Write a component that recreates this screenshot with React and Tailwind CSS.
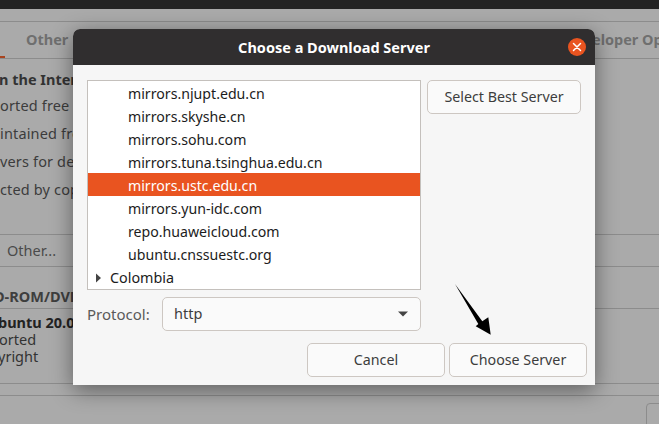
const font = { fontFamily: '"Noto Sans", sans-serif' };

function Row({ children, active }) {
  return (
    <div className={`h-[23px] pl-[40px] pt-[1px] text-[14.15px] leading-[23px] whitespace-nowrap ${active ? "bg-[#e95420] text-white" : "text-[#1c1c1c]"}`}>
      {children}
    </div>
  );
}

function Btn({ className, children }) {
  return (
    <button className={`h-[34px] rounded-[5px] border border-[#cdc7c2] bg-[#fafafa] text-[14.25px] text-[#3d3d3d] ${className}`}>
      {children}
    </button>
  );
}

export default function App() {
  return (
    <div style={font} className="relative w-[659px] h-[424px] overflow-hidden bg-[#aaaaaa] text-[#3c3c3c]">
      <div className="h-[9px] bg-[#232323]" />
      <div className="h-[13px] border-b border-[#8c8c8c]" />
      <div className="h-[37px] border-b border-[#8c8c8c] relative flex justify-between pl-[26px] pr-0 items-center text-[14.5px] font-bold text-[#6f6f6f] whitespace-nowrap overflow-hidden">
        <span>Other</span>
        <span className="w-[67px] overflow-hidden">eloper Op</span>
        <div className="absolute left-0 bottom-0 w-[5px] h-[2px] bg-[#a9441f]" />
      </div>
      <div className="h-[175px] pt-[8px] text-[14.5px] leading-[28px] whitespace-nowrap">
        <div className="font-bold -ml-[1px] text-[#333] h-[24px] leading-[24px]">n the Intern</div>
        <div className="tracking-[0.15px]">orted free</div>
        <div className="tracking-[0.15px]">intained free</div>
        <div className="tracking-[0.15px]">vers for dev</div>
        <div className="tracking-[0.15px]">cted by cop</div>
      </div>
      <div className="h-[33px] border-y border-[#8c8c8c] pl-[7px] text-[14.5px] leading-[31px] text-[#4a4a4a]">Other...</div>
      <div className="h-[42px] border-b border-[#8c8c8c] flex items-center -ml-[6px] font-bold text-[14.5px] text-[#3e3e3e] whitespace-nowrap pt-[18px]">D-ROM/DVD</div>
      <div className="h-[75px] border-b border-[#8c8c8c] pt-[5px] text-[14.5px] leading-[17px] whitespace-nowrap text-[#333]">
        <div className="font-bold -ml-[2px] text-[#222]">buntu 20.04</div>
        <div className="-ml-[1px]">orted</div>
        <div className="-ml-[2px]">yright</div>
      </div>
      <div className="h-[12px] border-b border-[#8c8c8c]" />
      <div className="absolute left-[646px] top-[403px] w-[20px] h-[30px] rounded-[4px] border border-[#8c8c8c]" />

      <div className="absolute left-[73px] top-[29px] w-[522px] h-[356px] rounded-t-[7px] bg-[#f6f6f6] flex flex-col shadow-[0_5px_22px_rgba(0,0,0,0.45)]">
        <div className="h-[36px] shrink-0 rounded-t-[7px] bg-[#302e2f] flex items-center justify-center relative text-white font-bold text-[14.5px] pt-[2px]">
          Choose a Download Server
          <div className="absolute left-[495px] top-[9px] w-[18px] h-[18px] rounded-full bg-[#e95420] flex items-center justify-center">
            <svg width="10" height="10" viewBox="0 0 10 10"><path d="M1.5 1.5L8.5 8.5M8.5 1.5L1.5 8.5" stroke="#fff" strokeWidth="1.5" strokeLinecap="round" /></svg>
          </div>
        </div>
        <div className="flex-1 px-[14px] pt-[15px] flex flex-col">
          <div className="flex gap-[6px]">
            <div className="w-[334px] h-[210px] border border-[#c4c0bc] bg-white overflow-hidden">
              <Row>mirrors.njupt.edu.cn</Row>
              <Row>mirrors.skyshe.cn</Row>
              <Row>mirrors.sohu.com</Row>
              <Row>mirrors.tuna.tsinghua.edu.cn</Row>
              <Row active>mirrors.ustc.edu.cn</Row>
              <Row>mirrors.yun-idc.com</Row>
              <Row>repo.huaweicloud.com</Row>
              <Row>ubuntu.cnssuestc.org</Row>
              <div className="h-[23px] pl-[7px] pt-[2px] flex items-center gap-[8px] text-[14.35px] text-[#1c1c1c]">
                <svg width="7" height="10" viewBox="0 0 7 10"><path d="M1 0.5L6 5L1 9.5Z" fill="#444" /></svg>
                Colombia
              </div>
            </div>
            <Btn className="w-[154px]">Select Best Server</Btn>
          </div>
          <div className="flex items-center mt-[7px] w-[334px] justify-between">
            <span className="text-[15px] text-[#5a5a5a]">Protocol:</span>
            <div className="w-[259px] h-[34px] rounded-[5px] border border-[#cdc7c2] bg-[#fafafa] flex items-center justify-between pl-[11px] pr-[11px] text-[14.5px] text-[#3d3d3d]">
              http
              <svg width="12" height="6" viewBox="0 0 12 6"><path d="M1 0.5H11L6 5.5Z" fill="#444" /></svg>
            </div>
          </div>
          <div className="flex justify-end gap-[4px] mt-[12px] -mr-[6px]">
            <Btn className="w-[138px]">Cancel</Btn>
            <Btn className="w-[138px]">Choose Server</Btn>
          </div>
        </div>
      </div>

      <svg className="absolute left-[450px] top-[280px]" width="50" height="60" viewBox="0 0 50 60">
        <path d="M5 4L32.3 41.3L38.3 37.3L40.7 54.7L25.7 46.3L28.3 44Z" fill="#000" />
      </svg>
    </div>
  );
}
